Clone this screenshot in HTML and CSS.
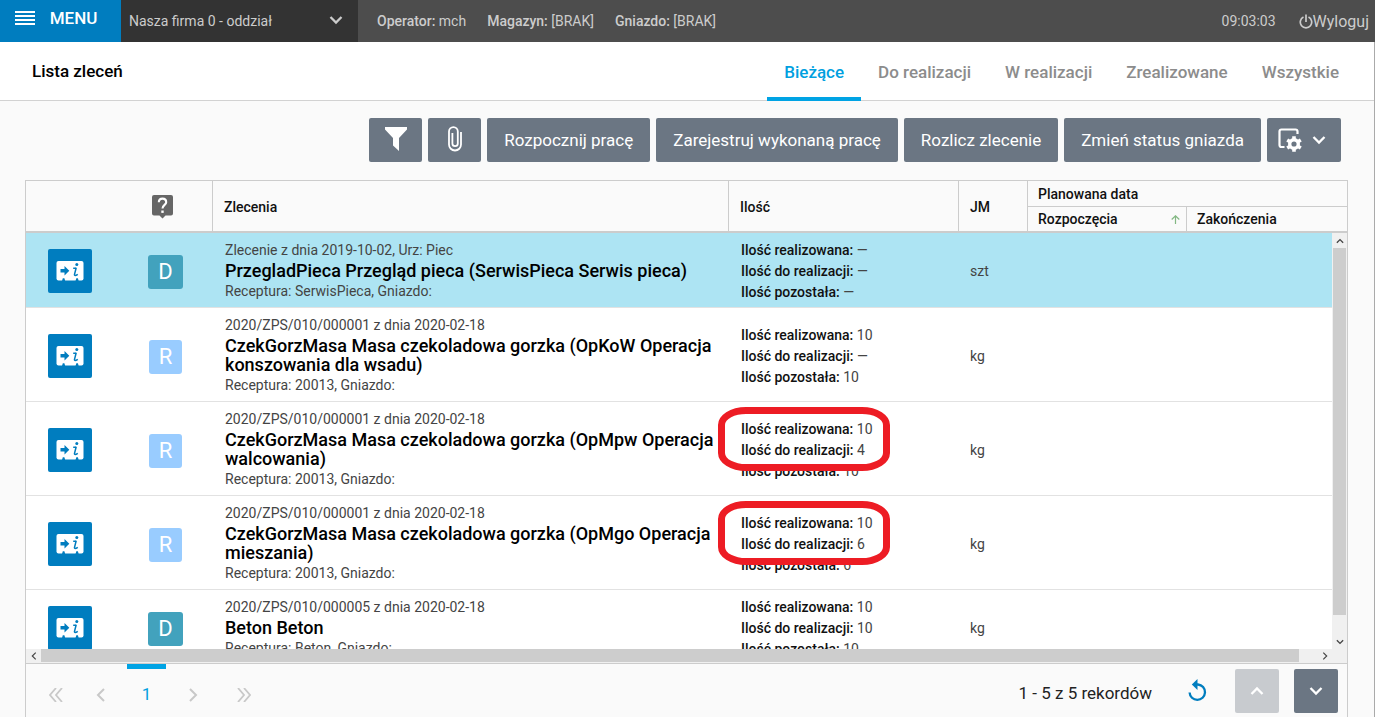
FILE: index.html
```html
<!DOCTYPE html>
<html lang="pl">
<head>
<meta charset="utf-8">
<title>Lista zleceń</title>
<link rel="stylesheet" href="styles.css">
</head>
<body>
<svg class="defs" aria-hidden="true">
  <symbol id="i-card" viewBox="0 0 28 20">
    <rect x=".5" width="27" height="19.500" rx="2" fill="#fff"/>
    <path fill="#007dbf" d="M6 20L6.800 17.300H8.400L9.200 20ZM19.500 20L20.300 17.300H21.900L22.700 20Z"/>
    <path fill="#007dbf" d="M4.500 8H8.500V5L13.300 9.700L8.500 14.400V11.400H4.500Z"/>
    <circle cx="20.800" cy="3.600" r="1.500" fill="#007dbf"/>
    <path d="M17.200 7.300Q19.600 7.500 20.200 6.700L18.500 13.300Q18.200 15.600 21.800 13.300" fill="none" stroke="#007dbf" stroke-width="1.500"/>
  </symbol>
  <symbol id="i-down" viewBox="0 0 14 10"><path d="M1.500 2L7 7.500L12.500 2" fill="none" stroke="currentColor" stroke-width="2.300"/></symbol>
  <symbol id="i-up" viewBox="0 0 14 10"><path d="M1.500 8L7 2.500L12.500 8" fill="none" stroke="currentColor" stroke-width="2.300"/></symbol>
  <symbol id="i-left" viewBox="0 0 10 14"><path d="M8 1L2 7L8 13" fill="none" stroke="currentColor" stroke-width="2"/></symbol>
  <symbol id="i-right" viewBox="0 0 10 14"><path d="M2 1L8 7L2 13" fill="none" stroke="currentColor" stroke-width="2"/></symbol>
</svg>

<header class="topbar">
  <button class="menu" type="button">
    <svg width="20" height="14" viewBox="0 0 20 14"><path d="M0 1H20M0 5H20M0 9H20M0 13H20" stroke="#fff" stroke-width="2"/></svg>
    MENU
  </button>
  <div class="company">
    <select aria-label="Firma"><option>Nasza firma 0 - oddział</option></select>
    <svg class="company-arrow" width="14" height="10"><use href="#i-down"/></svg>
  </div>
  <div class="info"><span><b>Operator:</b> mch</span><span><b>Magazyn:</b> [BRAK]</span><span><b>Gniazdo:</b> [BRAK]</span></div>
  <time class="clock">09:03:03</time>
  <a class="logout" href="#"><svg width="14" height="15" viewBox="0 0 14 15"><path d="M4.500 3A5.700 5.700 0 1 0 9.500 3M7 .5V8" fill="none" stroke="currentColor" stroke-width="1.700"/></svg>Wyloguj</a>
</header>

<main class="page">
  <div class="heading">
    <h1>Lista zleceń</h1>
    <nav class="tabs">
      <a class="active" href="#">Bieżące</a><a href="#">Do realizacji</a><a href="#">W realizacji</a><a href="#">Zrealizowane</a><a href="#">Wszystkie</a>
    </nav>
  </div>

  <div class="toolbar">
    <button class="btn icon" type="button" aria-label="Filtr"><svg width="22" height="24" viewBox="0 0 22 24"><path fill="#fff" d="M0 0H22V2.500L14 11V24L8 18.500V11L0 2.500Z"/></svg></button>
    <button class="btn icon" type="button" aria-label="Załączniki"><svg width="14" height="26" viewBox="0 0 14 26"><path d="M13 6V18.500A6 6 0 0 1 1 18.500V5.500A4.400 4.400 0 0 1 9.800 5.500V17.500A2.700 2.700 0 0 1 4.400 17.500V7" fill="none" stroke="#fff" stroke-width="1.800"/></svg></button>
    <button class="btn" type="button">Rozpocznij pracę</button>
    <button class="btn" type="button">Zarejestruj wykonaną pracę</button>
    <button class="btn" type="button">Rozlicz zlecenie</button>
    <button class="btn" type="button">Zmień status gniazda</button>
    <button class="btn config" type="button" aria-label="Konfiguracja">
      <svg width="24" height="24" viewBox="0 0 24 24"><path d="M6.500 19H3.500Q1.500 19 1.500 17V3.500Q1.500 1.500 3.500 1.500H17.500Q19.500 1.500 19.500 3.500V6" fill="none" stroke="#fff" stroke-width="2.200"/><circle cx="16" cy="16" r="4.300" fill="none" stroke="#fff" stroke-width="3.400"/><path d="M16 8.200V11M16 21V23.800M9.200 12L11.700 13.500M20.300 18.500L22.800 20M9.200 20L11.700 18.500M20.300 13.500L22.800 12" stroke="#fff" stroke-width="3.600"/></svg>
      <svg width="14" height="10"><use href="#i-down"/></svg>
    </button>
  </div>

  <section class="grid">
    <table class="head">
      <colgroup><col class="c-act"><col class="c-type"><col class="c-order"><col class="c-qty"><col class="c-unit"><col class="c-start"><col></colgroup>
      <thead>
        <tr>
          <th rowspan="2" class="plain"></th>
          <th rowspan="2" class="help"><svg width="21" height="24" viewBox="0 0 21 24"><path fill="#666" d="M2 0H19Q21 0 21 2V18.500Q21 20.500 19 20.500H13.500L10.500 23.500L7.500 20.500H2Q0 20.500 0 18.500V2Q0 0 2 0Z"/><path d="M6.800 7.300Q6.800 3.600 10.500 3.600T14.200 7.200C14.200 9.800 10.500 10 10.500 13.500" fill="none" stroke="#fff" stroke-width="2.100"/><path d="M9.300 15.500H11.700V17.900H9.300Z" fill="#fff"/></svg></th>
          <th rowspan="2">Zlecenia</th>
          <th rowspan="2">Ilość</th>
          <th rowspan="2">JM</th>
          <th colspan="2" class="group">Planowana data</th>
        </tr>
        <tr>
          <th class="sub"><div class="sorted">Rozpoczęcia <svg width="9" height="9" viewBox="0 0 9 9"><path d="M4.500 9V1M.7 4.500L4.500 .8L8.300 4.500" fill="none" stroke="#83b883" stroke-width="1.200"/></svg></div></th>
          <th class="sub">Zakończenia</th>
        </tr>
      </thead>
    </table>

    <div class="scroller">
      <div class="rows">
        <table class="body">
          <colgroup><col class="c-act"><col class="c-type"><col class="c-order"><col class="c-qty"><col class="c-unit"><col class="c-start"><col></colgroup>
          <tbody>
            <tr class="selected">
              <td class="act"><button type="button" aria-label="Szczegóły"><svg width="28" height="20"><use href="#i-card"/></svg></button></td>
              <td class="type"><span class="badge d">D</span></td>
              <td class="order"><p>Zlecenie z dnia 2019-10-02, Urz: Piec</p><h2>PrzegladPieca Przegląd pieca (SerwisPieca Serwis pieca)</h2><p>Receptura: SerwisPieca, Gniazdo:</p></td>
              <td class="qty"><p><b>Ilość realizowana:</b> —</p><p><b>Ilość do realizacji:</b> —</p><p><b>Ilość pozostała:</b> —</p></td>
              <td>szt</td><td></td><td></td>
            </tr>
            <tr>
              <td class="act"><button type="button" aria-label="Szczegóły"><svg width="28" height="20"><use href="#i-card"/></svg></button></td>
              <td class="type"><span class="badge r">R</span></td>
              <td class="order"><p>2020/ZPS/010/000001 z dnia 2020-02-18</p><h2>CzekGorzMasa Masa czekoladowa gorzka (OpKoW Operacja konszowania dla wsadu)</h2><p>Receptura: 20013, Gniazdo:</p></td>
              <td class="qty"><p><b>Ilość realizowana:</b> 10</p><p><b>Ilość do realizacji:</b> —</p><p><b>Ilość pozostała:</b> 10</p></td>
              <td>kg</td><td></td><td></td>
            </tr>
            <tr>
              <td class="act"><button type="button" aria-label="Szczegóły"><svg width="28" height="20"><use href="#i-card"/></svg></button></td>
              <td class="type"><span class="badge r">R</span></td>
              <td class="order"><p>2020/ZPS/010/000001 z dnia 2020-02-18</p><h2>CzekGorzMasa Masa czekoladowa gorzka (OpMpw Operacja walcowania)</h2><p>Receptura: 20013, Gniazdo:</p></td>
              <td class="qty marked"><p><b>Ilość realizowana:</b> 10</p><p><b>Ilość do realizacji:</b> 4</p><p><b>Ilość pozostała:</b> 10</p><span class="ring"></span></td>
              <td>kg</td><td></td><td></td>
            </tr>
            <tr>
              <td class="act"><button type="button" aria-label="Szczegóły"><svg width="28" height="20"><use href="#i-card"/></svg></button></td>
              <td class="type"><span class="badge r">R</span></td>
              <td class="order"><p>2020/ZPS/010/000001 z dnia 2020-02-18</p><h2>CzekGorzMasa Masa czekoladowa gorzka (OpMgo Operacja mieszania)</h2><p>Receptura: 20013, Gniazdo:</p></td>
              <td class="qty marked"><p><b>Ilość realizowana:</b> 10</p><p><b>Ilość do realizacji:</b> 6</p><p><b>Ilość pozostała:</b> 6</p><span class="ring"></span></td>
              <td>kg</td><td></td><td></td>
            </tr>
            <tr>
              <td class="act"><button type="button" aria-label="Szczegóły"><svg width="28" height="20"><use href="#i-card"/></svg></button></td>
              <td class="type"><span class="badge d">D</span></td>
              <td class="order"><p>2020/ZPS/010/000005 z dnia 2020-02-18</p><h2>Beton Beton</h2><p>Receptura: Beton, Gniazdo:</p></td>
              <td class="qty"><p><b>Ilość realizowana:</b> 10</p><p><b>Ilość do realizacji:</b> 10</p><p><b>Ilość pozostała:</b> 10</p></td>
              <td>kg</td><td></td><td></td>
            </tr>
          </tbody>
        </table>
      </div>
      <div class="vbar">
        <button type="button" aria-label="W górę"><svg width="8" height="6"><use href="#i-up"/></svg></button>
        <span class="vthumb"></span>
        <button class="vend" type="button" aria-label="W dół"><svg width="8" height="6"><use href="#i-down"/></svg></button>
      </div>
      <div class="hbar">
        <button type="button" aria-label="W lewo"><svg width="6" height="8"><use href="#i-left"/></svg></button>
        <span class="hthumb"></span>
        <button class="hend" type="button" aria-label="W prawo"><svg width="6" height="8"><use href="#i-right"/></svg></button>
      </div>
    </div>

    <footer class="pager">
      <button type="button" aria-label="Pierwsza"><svg width="14" height="14" viewBox="0 0 14 14"><path d="M7 0L1 7L7 14M13 0L7 7L13 14" fill="none" stroke="currentColor" stroke-width="1.800"/></svg></button>
      <button type="button" aria-label="Poprzednia"><svg width="10" height="14"><use href="#i-left"/></svg></button>
      <button type="button" class="current">1</button>
      <button type="button" aria-label="Następna"><svg width="10" height="14"><use href="#i-right"/></svg></button>
      <button type="button" aria-label="Ostatnia" class="last"><svg width="14" height="14" viewBox="0 0 14 14"><path d="M1 0L7 7L1 14M7 0L13 7L7 14" fill="none" stroke="currentColor" stroke-width="1.800"/></svg></button>
      <span class="count">1 - 5 z 5 rekordów</span>
      <button type="button" class="refresh" aria-label="Odśwież"><svg width="20" height="23" viewBox="0 0 20 23"><path d="M8 5.500H10A7.700 7.700 0 1 1 1.600 13.500" fill="none" stroke="currentColor" stroke-width="2.300"/><path d="M9.500 0V11L3.800 5.500Z" fill="currentColor"/></svg></button>
      <button type="button" class="step off" aria-label="Poprzedni rekord"><svg width="14" height="10"><use href="#i-up"/></svg></button>
      <button type="button" class="step" aria-label="Następny rekord"><svg width="14" height="10"><use href="#i-down"/></svg></button>
    </footer>
  </section>
</main>
</body>
</html>
```
FILE: styles.css
```css
* { box-sizing: border-box; margin: 0; padding: 0; }

body {
  display: flex;
  flex-direction: column;
  height: 100vh;
  overflow: hidden;
  background: #fafafa;
  color: #444;
  font: 14px/21px Roboto, "Noto Sans", sans-serif;
}

button, select { font: inherit; border: 0; cursor: pointer; }
button { display: flex; align-items: center; justify-content: center; }
a { text-decoration: none; }
b { font-weight: 500; }
.defs { position: absolute; width: 0; height: 0; }

/* Top bar */
.topbar {
  display: flex;
  align-items: stretch;
  flex: none;
  height: 42px;
  background: #4d4d4d;
  color: #ccc;
}
.menu {
  gap: 15px;
  width: 121px;
  padding: 0 9px 6px 0;
  background: #007dbf;
  color: #fff;
  font-size: 17px;
  font-weight: 500;
}
.company { position: relative; width: 237px; }
.company select {
  width: 100%;
  height: 100%;
  padding: 0 32px 0 8px;
  appearance: none;
  background: #333;
  color: #ccc;
}
.company-arrow { position: absolute; right: 15px; top: 15px; pointer-events: none; }
.info { display: flex; align-items: center; gap: 21px; padding-left: 19px; }
.clock { display: flex; align-items: center; margin-left: auto; }
.logout { display: flex; align-items: center; padding: 0 6px 0 23px; color: #ccc; font-size: 16px; }

/* Page heading */
.page {
  display: flex;
  flex-direction: column;
  flex: 1;
  min-height: 0;
  border-right: 1px solid #aaa;
}
.heading {
  display: flex;
  justify-content: space-between;
  flex: none;
  height: 59px;
  padding: 0 18px 0 32px;
  background: #fff;
  border-bottom: 1px solid #d2d2d2;
}
.heading h1 { color: #000; font-size: 17px; font-weight: 500; line-height: 58px; }
.tabs { display: flex; font-size: 17px; font-weight: 500; line-height: 60px; }
.tabs a { height: 59px; padding: 0 17px; color: #8c8c8c; }
.tabs .active { color: #00a0e0; border-bottom: 4px solid #00a3e4; }

/* Action buttons */
.toolbar { display: flex; justify-content: flex-end; flex: none; gap: 6px; padding: 17px 33px 18px; }
.btn {
  height: 44px;
  padding: 1px 17px 0;
  border-radius: 2px;
  background: #6b7683;
  color: #fff;
  font-size: 17px;
}
.icon { width: 53px; padding: 0 0 2px; }
.config { gap: 10px; width: 74px; padding: 0 4px 0 0; }

/* Orders table */
.grid {
  display: flex;
  flex-direction: column;
  flex: 1;
  min-height: 0;
  margin: 0 26px 0 25px;
  border: 1px solid #ccc;
  border-bottom: 0;
}
table { width: 100%; table-layout: fixed; border-collapse: separate; border-spacing: 0; }
.c-act { width: 87px; }
.c-type { width: 100px; }
.c-order { width: 516px; }
.c-qty { width: 230px; }
.c-unit { width: 69px; }
.c-start { width: 159px; }
.head { flex: none; }
.head th {
  height: 52px;
  padding: 2px 10px 0 11px;
  border-right: 1px solid #ccc;
  border-bottom: 2px solid #ccc;
  color: #111;
  font-weight: 500;
  text-align: left;
}
.head .plain { border-right: 0; }
.head .help { padding: 2px 0 0; text-align: center; }
.help svg { display: block; margin: 0 auto; }
.head .group { height: 26px; padding: 1px 0 0 10px; border-right: 0; border-bottom-width: 1px; }
.head .sub { height: 26px; padding: 0 6px 0 10px; }
.head .sub:last-child { border-right: 0; }
.sorted { display: flex; align-items: center; justify-content: space-between; }

.scroller {
  display: grid;
  grid-template: minmax(0, 1fr) 14px / minmax(0, 1fr) 15px;
  flex: 1;
  min-height: 0;
  border-bottom: 1px solid #ccc;
}
.rows { overflow: hidden; background: #fff; }
.body td { padding: 7px 11px 4px; border-bottom: 1px solid #e2e2e2; vertical-align: middle; }
.body .selected td { background: #ade4f3; }
.body .act { padding: 2px 0 0 22px; }
.act button { width: 44px; height: 44px; border-radius: 2px; background: #007dbf; }
.body .type { padding: 4px 0 0 35px; }
.badge {
  display: block;
  width: 35px;
  border-radius: 3px;
  color: #fff;
  font-size: 22px;
  line-height: 34px;
  text-align: center;
}
.d { background: #42a2bd; }
.r { width: 33px; margin-left: 1px; background: #99ccff; }
.body .order { padding: 6px 11px 5px 12px; }
.order p { line-height: 22px; }
.order h2 { color: #000; font-size: 18px; font-weight: 500; line-height: 19px; }
.body .qty { padding-left: 12px; }
.qty b { color: #111; }
.marked { position: relative; }
.ring {
  position: absolute;
  top: 5px;
  left: -11px;
  width: 172px;
  height: 64px;
  border: 7px solid #ed1c24;
  border-radius: 28px / 18px;
}

/* Scroll bars */
.vbar { display: flex; flex-direction: column; grid-row: 1 / 3; grid-column: 2; background: #f0f0f0; }
.hbar { display: flex; background: #f0f0f0; }
.vbar button { height: 15px; background: none; color: #444; }
.hbar button { width: 15px; background: none; color: #444; }
.vthumb { height: 367px; margin: 0 1px; background: #cdcdcd; }
.hthumb { flex: 1; margin: 0 18px 1px 0; background: #cdcdcd; }
.vbar .vend { margin-top: auto; margin-bottom: 14px; }

/* Pager */
.pager { display: flex; align-items: center; flex: none; height: 53px; padding-right: 9px; }
.pager button { width: 45px; height: 53px; padding-top: 8px; background: none; color: #c8c8c8; }
.pager button:first-child { margin-left: 7px; }
.pager .current {
  width: 39px;
  margin: 0 4px;
  padding-top: 3px;
  border-top: 5px solid #00a3e4;
  color: #00a0e0;
  font-size: 17px;
}
.pager .last { margin-left: 6px; }
.count { margin-left: auto; padding-top: 5px; color: #222; font-size: 17px; }
.pager .refresh { width: 40px; height: 44px; margin: 0 17px 0 26px; padding: 0; color: #007dbf; }
.pager .step { width: 44px; height: 44px; margin-left: 15px; padding: 0; border-radius: 2px; background: #6b7683; color: #fff; }
.pager .off { margin-left: 0; background: #c8cbcf; }
```
